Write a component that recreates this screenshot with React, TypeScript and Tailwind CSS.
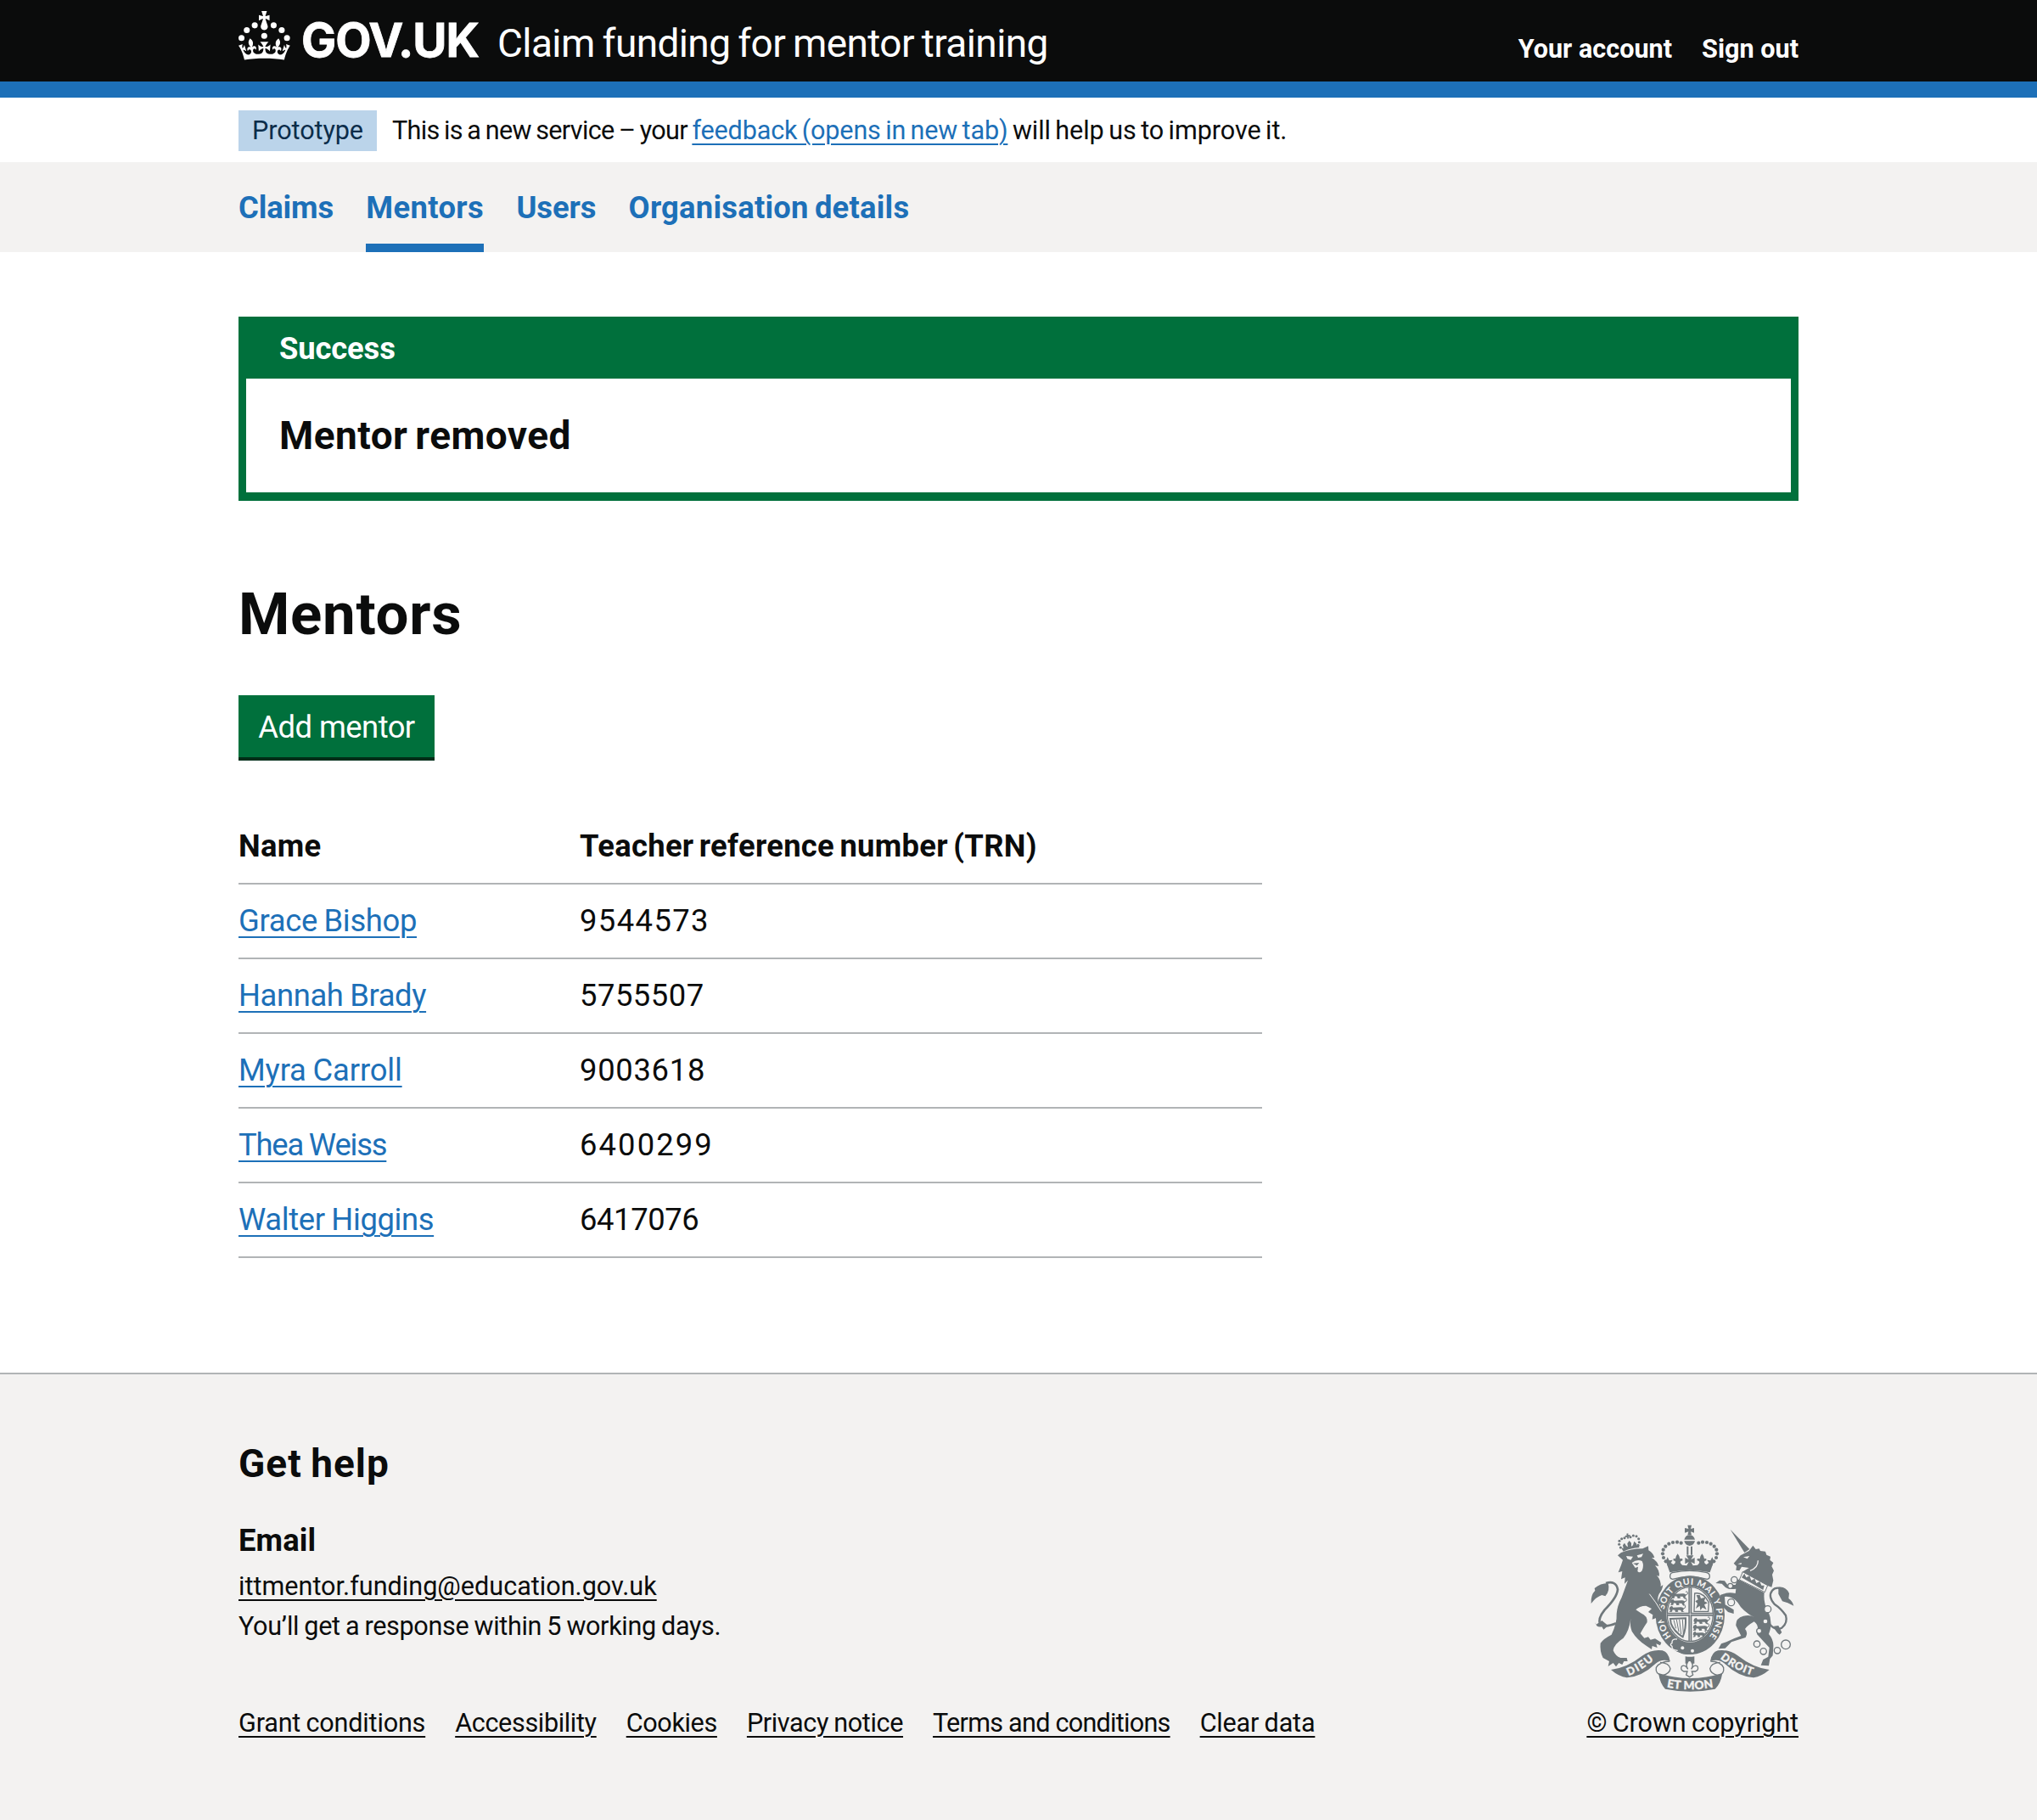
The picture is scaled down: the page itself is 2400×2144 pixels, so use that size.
import React from 'react';

const INK = '#6f777b';
const PAPER = '#f3f2f1';

function CrownLogo() {
  return (
    <svg className="mt-[13px] h-[76px] w-[290px] shrink-0" viewBox="0 0 290 76" role="img" aria-label="GOV.UK" fill="#fff">
      <g transform="scale(0.957)">
        <circle cx="20" cy="17.6" r="3.7" />
        <circle cx="10.2" cy="23.5" r="3.7" />
        <circle cx="3.7" cy="33.2" r="3.7" />
        <circle cx="31.7" cy="30.6" r="3.7" />
        <circle cx="43.3" cy="17.6" r="3.7" />
        <circle cx="53.2" cy="23.5" r="3.7" />
        <circle cx="59.7" cy="33.2" r="3.7" />
        <path d="M33.1,9.8c.2-.1.3-.3.5-.5l4.6,2.4v-6.8l-4.6,1.5c-.1-.2-.3-.3-.5-.5l1.9-5.9h-6.7l1.9,5.9c-.2.1-.3.3-.5.5l-4.6-1.5v6.8l4.6-2.4c.1.2.3.3.5.5l-2.6,8c-.9,2.8,1.2,5.7,4.1,5.7h0c3,0,5.1-2.9,4.1-5.7l-2.6-8ZM37,37.9s-3.4,3.8-4.1,6.1c2.2,0,4.2-.5,6.4-2.8l-.7,8.5c-2-2.8-4.4-4.1-5.7-3.8.1,3.1.5,6.7,5.8,7.2,3.7.3,6.7-1.5,7-3.8.4-2.6-2-4.3-3.7-1.6-1.4-4.5,2.4-6.1,4.9-3.2-1.9-4.5-1.8-7.7,2.4-10.9,3,4,2.6,7.3-1.2,11.1,2.4-1.3,6.2,0,4,4.6-1.2-2.8-3.7-2.2-4.2.2-.3,1.7.7,3.7,3,4.2,1.9.3,4.7-.9,7-5.9-1.3,0-2.4.7-3.9,1.7l2.4-8c.6,2.3,1.4,3.7,2.2,4.5.6-1.6.5-2.8,0-5.3l5,1.8c-2.6,3.6-5.2,8.7-7.3,17.5-7.4-1.1-15.7-1.7-24.5-1.7h0c-8.8,0-17.1.6-24.5,1.7-2.1-8.9-4.7-13.9-7.3-17.5l5-1.8c-.5,2.5-.6,3.7,0,5.3.8-.8,1.6-2.3,2.2-4.5l2.4,8c-1.5-1-2.6-1.7-3.9-1.7,2.3,5,5.2,6.2,7,5.9,2.3-.4,3.3-2.4,3-4.2-.5-2.4-3-3.1-4.2-.2-2.2-4.6,1.6-6,4-4.6-3.7-3.7-4.2-7.1-1.2-11.1,4.2,3.2,4.3,6.4,2.4,10.9,2.5-2.8,6.3-1.3,4.9,3.2-1.8-2.7-4.1-1-3.7,1.6.3,2.3,3.3,4.1,7,3.8,5.4-.5,5.7-4.2,5.8-7.2-1.3-.2-3.7,1-5.7,3.8l-.7-8.5c2.2,2.3,4.2,2.7,6.4,2.8-.7-2.3-4.1-6.1-4.1-6.1h10.6,0Z" />
      </g>
      <text x="74" y="54" textLength="210" fontFamily="Inter, Roboto, sans-serif" fontWeight="700" fontSize="55" stroke="#fff" strokeWidth="0.8">
        GOV.UK
      </text>
    </svg>
  );
}

const crownBeads: [number, number][] = [
  [349, 184], [338, 173], [330, 160], [327, 146], [329, 132], [337, 120], [349, 111], [363, 106], [378, 105], [392, 108],
];
const lionBeads: [number, number][] = [
  [178, 124], [173, 113], [174, 101], [182, 93], [192, 90], [213, 87], [223, 82], [234, 84], [242, 93], [244, 105], [240, 116],
];
const chain: [number, number, number][] = [
  [580, 238, 11], [566, 260, 9], [569, 318, 12], [698, 342, 12], [690, 385, 9], [668, 419, 9], [660, 465, 11], [683, 491, 11], [732, 488, 11], [762, 467, 16],
];

function Passant({ x, y }: { x: number; y: number }) {
  return (
    <g transform={`translate(${x} ${y})`} fill={INK}>
      <path d="M2 2 L10 -2 L14 4 L40 3 Q48 2 52 8 L48 16 L54 19 L44 20 L40 13 L30 13 L32 19 L22 20 L20 13 L12 12 L10 19 L0 20 L4 14 L0 10Z" />
      <path d="M50 8 Q60 6 57 -2 Q54 -6 50 -3" fill="none" stroke={INK} strokeWidth="3" />
    </g>
  );
}

function RoyalArms() {
  return (
    <svg className="h-[198px] w-[240px]" viewBox="72 40 720 594" role="img" aria-label="Royal coat of arms" fill={INK}>
      <defs>
        <path id="motto-ring" d="M360 441.4 A93 108 0 1 1 488 441.4" />
        <path id="dieu-line" d="M206 577 Q258 557 304 514" />
        <path id="mon-line" d="M338 617 Q424 634 512 617" />
        <path id="droit-line" d="M530 516 Q580 557 648 577" />
      </defs>

      {/* Imperial crown */}
      <path d="M415 45 L429 45 L426 58 L438 55 L438 72 L426 68 L429 80 L415 80 L418 68 L405 72 L405 55 L418 58Z" />
      <path d="M403 96 Q408 80 422 80 Q436 80 441 96Z" />
      <path d="M403 101 H441 Q438 116 422 118 Q406 116 403 101Z" />
      <path d="M412 120 H418 V150 H412Z M426 120 H432 V150 H426Z" />
      {crownBeads.map(([x, y]) => (
        <g key={x + '-' + y}>
          <circle cx={x} cy={y} r="6.3" />
          <circle cx={846 - x} cy={y} r="6.3" />
        </g>
      ))}
      <path d="M410 152 H436 L427 167 L440 160 V182 L427 175 L434 188 L450 186 Q460 178 455 172 L449 170 Q446 160 458 164 Q458 156 466 146 Q474 156 474 164 Q484 160 481 170 L475 172 Q472 180 482 184 L490 178 L484 168 L496 170 L502 158 L508 172 L494 212 Q422 196 352 212 L338 172 L344 158 L350 170 L362 168 L356 178 L364 184 Q374 180 371 172 L365 170 Q362 160 372 164 Q372 156 380 146 Q388 156 388 164 Q400 160 397 170 L391 172 Q386 178 396 186 L412 188 L419 175 L406 182 V160 L419 167Z" />
      <path d="M353 224 Q354 212 366 212 Q422 200 480 212 Q492 214 493 224 Q494 234 484 236 Q422 218 362 236 Q352 234 353 224Z" fill={PAPER} stroke={INK} strokeWidth="4" />

      {/* Garter */}
      <ellipse cx="424" cy="363" rx="122" ry="139" />
      <path d="M358 460 L372 444 Q424 476 484 442 L482 480 Q440 508 396 500 L362 484Z" />
      <text fontFamily="Lato, sans-serif" fontWeight="900" fontSize="31" fill={PAPER}>
        <textPath href="#motto-ring" textLength="478" startOffset="4">HONI SOIT QUI MAL Y PENSE</textPath>
      </text>
      <circle cx="397" cy="479" r="6" fill={PAPER} />
      <circle cx="432" cy="489" r="6" fill={PAPER} />
      <path d="M378 448 Q358 446 360 462 Q350 467 360 473 Q358 488 380 488" fill="none" stroke={PAPER} strokeWidth="4" />
      <ellipse cx="424" cy="360" rx="84" ry="99" fill={PAPER} />
      <ellipse cx="424" cy="360" rx="81" ry="96" fill={PAPER} stroke={INK} strokeWidth="4" />

      {/* Quartered shield */}
      <path d="M418 266 H430 V456 H418Z M342 354 H506 V366 H342Z" />
      <path d="M424 268 V454 M344 360 H504" stroke={PAPER} strokeWidth="2" />
      <Passant x={358} y={284} />
      <Passant x={354} y={308} />
      <Passant x={350} y={332} />
      <Passant x={436} y={374} />
      <Passant x={434} y={398} />
      <g transform="translate(434 422) scale(0.8 0.95)">
        <Passant x={0} y={0} />
      </g>
      <path d="M440 286 Q470 280 490 318 L488 350 H438Z" fill="none" stroke={INK} strokeWidth="4" />
      <path d="M446 292 L458 292 L462 304 L478 300 L474 314 L486 320 L474 326 L482 344 L468 336 L460 346 L458 330 L444 340 L450 322 L442 314 L452 308Z" />
      <path d="M354 376 L408 374 Q410 410 398 440 Q366 420 356 392Z" fill="none" stroke={INK} strokeWidth="6" />
      <path d="M366 380 L374 410 M376 379 L384 422 M386 378 L392 430 M397 378 L400 430" stroke={INK} strokeWidth="3" />

      {/* Lion */}
      {lionBeads.map(([x, y]) => <circle key={x + '-' + y} cx={x} cy={y} r="4.6" />)}
      <path d="M199 75 L205 74 L205 80 L211 79 L212 85 L206 86 L208 92 L202 93 L201 87 L195 88 L194 82 L200 81Z" />
      <path d="M180 124 L188 128 L186 116 L192 108 L198 118 L204 122 L202 110 L209 100 L216 108 L216 120 L222 116 L226 102 L234 110 L236 118 L243 113 L244 124 Q214 126 188 138Z" />
      <path d="M168 152 L180 142 Q214 128 256 128 L276 119 L277 134 Q294 144 298 160 L288 160 Q308 172 313 190 L300 188 Q318 206 314 226 L306 222 Q322 240 320 262 L328 256 Q326 274 314 288 Q306 304 312 322 Q328 346 338 368 L334 388 L322 378 L310 388 L306 372 L290 378 L292 362 L276 352 L288 340 L268 330 Q244 330 232 344 L250 356 Q274 366 272 388 Q256 412 248 428 L262 444 L276 440 L284 450 L300 446 L322 460 L318 470 L304 464 L308 478 L290 472 L288 484 L270 472 Q236 450 218 420 Q210 400 214 376 Q208 420 188 444 Q154 466 152 488 Q160 508 178 514 L200 514 L203 526 L190 526 L184 538 L172 532 L162 545 L152 532 L134 544 L138 526 L116 514 Q104 490 107 462 Q118 446 146 432 Q166 390 164 358 Q166 330 182 300 L196 262 L204 240 L192 252 L194 230 L180 236 L184 208 L170 212 L180 186 L186 168Z" />
      <path d="M198 154 L222 156 L214 168 L202 164Z M236 152 L258 146 L252 158 L240 160Z" fill={PAPER} />
      <path d="M218 178 Q236 164 254 172 Q262 188 254 206 Q246 216 238 208 L240 192 L230 196Z" fill={PAPER} />
      <path d="M222 180 L244 178 L236 188Z" />
      <path d="M280 288 Q304 318 322 350" fill="none" stroke={PAPER} strokeWidth="3" />
      <path d="M162 392 Q124 408 106 396 Q96 376 122 344 Q166 300 168 272 Q162 240 126 250" fill="none" stroke={INK} strokeWidth="8" />
      <path d="M74 322 Q72 292 88 276 L86 268 Q106 250 134 250 Q142 276 124 296 L112 292 Q92 298 74 322Z M112 382 L92 396 L88 388 Q92 408 112 404 L118 414 L134 400Z" />

      {/* Unicorn */}
      <path d="M566 60 L634 130 L616 142Z" />
      <path d="M578 180 L602 152 L632 136 L646 117 L656 130 L668 128 L672 136 L690 138 L694 150 L708 156 L706 168 L718 178 L712 190 L720 206 L714 220 L718 240 L712 264 L690 256 L606 212 L632 196 L606 192 L598 206 L586 204 L588 190Z" />
      <path d="M612 158 L634 154 L626 164Z M592 182 L606 178 L604 184Z" fill={PAPER} />
      <path d="M636 206 Q664 196 664 170" fill="none" stroke={PAPER} strokeWidth="4" />
      <path d="M592 236 L686 284 Q682 320 700 350 Q718 390 702 430 Q720 450 718 476 L716 506 L706 518 L702 542 L674 540 L682 520 L700 510 L704 478 Q676 448 660 430 Q670 400 650 386 Q626 400 618 412 Q630 424 620 442 L570 458 L548 480 L524 482 L534 464 L552 458 Q580 444 604 436 L586 400 Q584 374 612 366 Q636 360 650 370 Q610 350 592 318 Q570 294 546 298 L548 326 L578 344 L578 358 L558 352 L538 332 Q528 308 530 292 Q556 280 584 286 L586 270 Q556 274 546 262 L536 252 L514 250 L528 240 L546 242 L556 256 L584 256Z" />
      <path d="M610 210 L698 258 L688 282 L598 238Z" fill={PAPER} stroke={INK} strokeWidth="3" />
      <path d="M606 230 L616 216 L622 230 L634 224 L640 240 L652 234 L658 250 L670 244 L676 258 L686 258 L682 274Z" />
      <path d="M704 394 Q726 420 748 408 Q770 390 762 364 Q746 340 722 324 Q698 296 714 276 Q724 264 742 268" fill="none" stroke={INK} strokeWidth="7" />
      <path d="M736 264 Q762 260 774 286 L772 304 Q786 314 790 330 Q768 318 750 314 L736 288Z M736 400 L748 424 L740 432 Q724 420 720 402Z" />
      {chain.map(([x, y, r]) => (
        <ellipse key={x + '-' + y} cx={x} cy={y} rx={r} ry={r} fill={PAPER} stroke={INK} strokeWidth="4" />
      ))}

      {/* Ribbon */}
      <path d="M352 526 Q318 526 304 548 Q300 572 326 576 Q352 570 354 552 Q350 532 318 530" fill={PAPER} stroke={INK} strokeWidth="4" />
      <path d="M496 526 Q530 526 542 548 Q546 572 522 576 Q496 570 494 552 Q498 532 530 530" fill={PAPER} stroke={INK} strokeWidth="4" />
      <path d="M144 556 Q200 550 256 506 Q290 482 326 488 Q348 494 353 526 Q324 516 302 534 Q254 580 200 584 Q172 580 144 556Z" />
      <path d="M704 556 Q648 550 592 506 Q558 482 522 488 Q500 494 495 526 Q524 516 546 534 Q594 580 648 584 Q676 580 704 556Z" />
      <path d="M312 568 Q424 604 538 568 Q532 606 512 624 Q424 642 336 624 Q318 606 312 568Z" />
      <text fontFamily="Lato, sans-serif" fontWeight="900" fontSize="38" fill={PAPER} stroke={PAPER} strokeWidth="1">
        <textPath href="#dieu-line" textLength="106">DIEU</textPath>
      </text>
      <text fontFamily="Lato, sans-serif" fontWeight="900" fontSize="41" fill={PAPER} stroke={PAPER} strokeWidth="1">
        <textPath href="#mon-line" textLength="166" startOffset="3">ET MON</textPath>
      </text>
      <text fontFamily="Lato, sans-serif" fontWeight="900" fontSize="38" fill={PAPER} stroke={PAPER} strokeWidth="1">
        <textPath href="#droit-line" textLength="128">DROIT</textPath>
      </text>
      <path d="M407 509 Q422 512 439 509 V534 H407Z" />
      <path d="M422 520 Q440 538 428 554 Q438 536 450 544 Q456 558 442 562 L430 562 L434 574 L422 582 L410 574 L414 562 L402 562 Q388 558 394 544 Q406 536 416 554 Q404 538 422 520Z" fill={PAPER} stroke={INK} strokeWidth="4" />
    </svg>
  );
}

const link = 'underline decoration-2 underline-offset-[0.1578em]';

const mentors = [
  { name: 'Grace Bishop', nameClass: 'tracking-[-0.34px]', trn: '9544573', trnClass: 'tracking-[1.4px]' },
  { name: 'Hannah Brady', nameClass: 'tracking-[-0.38px]', trn: '5755507', trnClass: 'tracking-[0.5px]' },
  { name: 'Myra Carroll', nameClass: 'tracking-[-0.17px]', trn: '9003618', trnClass: 'tracking-[0.7px]' },
  { name: 'Thea Weiss', nameClass: 'tracking-[-1.2px]', trn: '6400299', trnClass: 'tracking-[2.1px]' },
  { name: 'Walter Higgins', nameClass: 'tracking-[-0.37px]', trn: '6417076', trnClass: 'tracking-[-0.4px]' },
];

const footerLinks = [
  { label: 'Grant conditions', spacing: 'tracking-[-0.2px] [word-spacing:-1px]' },
  { label: 'Accessibility', spacing: 'tracking-[-0.36px]' },
  { label: 'Cookies', spacing: 'tracking-[-0.37px]' },
  { label: 'Privacy notice', spacing: 'tracking-[-0.38px] [word-spacing:-1px]' },
  { label: 'Terms and conditions', spacing: 'tracking-[-0.75px]' },
  { label: 'Clear data', spacing: 'tracking-[-0.2px] [word-spacing:-1px]' },
];

const container = 'mx-auto w-[1838px]';

export default function App() {
  return (
    <div className="flex min-h-[2144px] flex-col bg-white font-[Roboto,sans-serif] text-[36.4px] text-[#0b0c0c]">
      <header className="h-[115px] border-b-[19px] border-[#1d70b8] bg-[#0b0c0c] text-white">
        <div className={`${container} flex items-start`}>
          <CrownLogo />
          <span className="mt-[28px] ml-[15px] text-[46px] leading-[46px] tracking-[-0.6px] [word-spacing:-2px]">
            Claim funding for mentor training
          </span>
          <nav className="mt-[38px] ml-auto flex gap-[35px] text-[30.6px] leading-[40px] font-bold">
            <a>Your account</a>
            <a>Sign out</a>
          </nav>
        </div>
      </header>

      <div className={`${container} flex h-[76px] items-start pt-[15px] text-[30.6px]`}>
        <strong className="h-[48px] w-[163px] bg-[#bbd4ea] text-center leading-[48px] font-normal tracking-[-0.1px] text-[#0c2d4a]">
          Prototype
        </strong>
        <p className="ml-[18px] leading-[48px] whitespace-pre">
          <span className="tracking-[-0.68px] [word-spacing:-1.5px]">This is a new service – your </span>
          <a className={`${link} tracking-[-0.17px] text-[#1d70b8] [word-spacing:-2px]`}>feedback (opens in new tab)</a>
          <span className="tracking-[-0.09px] [word-spacing:-2px]"> will help us to improve it.</span>
        </p>
      </div>

      <nav className="bg-[#f3f2f1] text-[#1d70b8]">
        <div className={`${container} flex h-[106px] gap-[38.3px] leading-[108px] font-bold`}>
          <a className="tracking-[-0.13px]">Claims</a>
          <a className="h-[106px] border-b-[10px] border-[#1d70b8] tracking-[0.36px]">Mentors</a>
          <a className="tracking-[-0.1px]">Users</a>
          <a className="tracking-[0.22px] [word-spacing:-2px]">Organisation details</a>
        </div>
      </nav>

      <main className={`${container} mt-[76px]`}>
        <section className="border-x-[9px] border-b-[10px] border-[#00703c]">
          <h2 className="h-[73px] bg-[#00703c] pl-[39px] leading-[76px] font-bold tracking-[-0.15px] text-white">Success</h2>
          <p className="h-[134px] pl-[39px] text-[46px] leading-[134px] font-bold tracking-[0.45px] [word-spacing:-3px]">
            Mentor removed
          </p>
        </section>

        <h1 className="mt-[96px] text-[69px] leading-[76px] font-bold tracking-[0.7px]">Mentors</h1>

        <button className="mt-[57px] block h-[73px] w-[231px] bg-[#00703c] pt-[4px] tracking-[-0.55px] text-white shadow-[0_4px_0_#002d18]">
          Add mentor
        </button>

        <table className="mt-[61px] w-[1206px] table-fixed border-collapse text-left leading-[86px]">
          <thead>
            <tr className="h-[88px] border-b-2 border-[#b1b4b6]">
              <th className="w-[402px] p-0 font-bold tracking-[0.3px]">Name</th>
              <th className="p-0 font-bold tracking-[0.3px] [word-spacing:-3px]">Teacher reference number (TRN)</th>
            </tr>
          </thead>
          <tbody>
            {mentors.map((m) => (
              <tr key={m.trn} className="h-[88px] border-b-2 border-[#b1b4b6]">
                <td className="p-0">
                  <a className={`${link} ${m.nameClass} text-[#1d70b8] [word-spacing:-1px]`}>{m.name}</a>
                </td>
                <td className={`p-0 ${m.trnClass}`}>{m.trn}</td>
              </tr>
            ))}
          </tbody>
        </table>
      </main>

      <footer className="mt-[135px] grow border-t-2 border-[#b1b4b6] bg-[#f3f2f1]">
        <div className={`${container} flex items-end justify-between pt-[81px]`}>
          <div>
            <h2 className="text-[46px] leading-[48px] font-bold tracking-[1px] [word-spacing:-2px]">Get help</h2>
            <h3 className="mt-[43px] leading-[48px] font-bold tracking-[0.1px]">Email</h3>
            <div className="mt-[6px] text-[30.6px] leading-[47px]">
              <p>
                <a className={link}>ittmentor.funding@education.gov.uk</a>
              </p>
              <p className="tracking-[-0.35px] [word-spacing:-1px]">You’ll get a response within 5 working days.</p>
            </div>
            <div className="mt-[67px] flex gap-[35px] text-[30.6px] leading-[48px]">
              {footerLinks.map((l) => (
                <a key={l.label} className={`${link} ${l.spacing}`}>
                  {l.label}
                </a>
              ))}
            </div>
          </div>
          <div className="flex flex-col items-center gap-[13px] text-[30.6px] leading-[48px]">
            <RoyalArms />
            <a className={`${link} tracking-[-0.1px] [word-spacing:-1px]`}>© Crown copyright</a>
          </div>
        </div>
      </footer>
    </div>
  );
}
